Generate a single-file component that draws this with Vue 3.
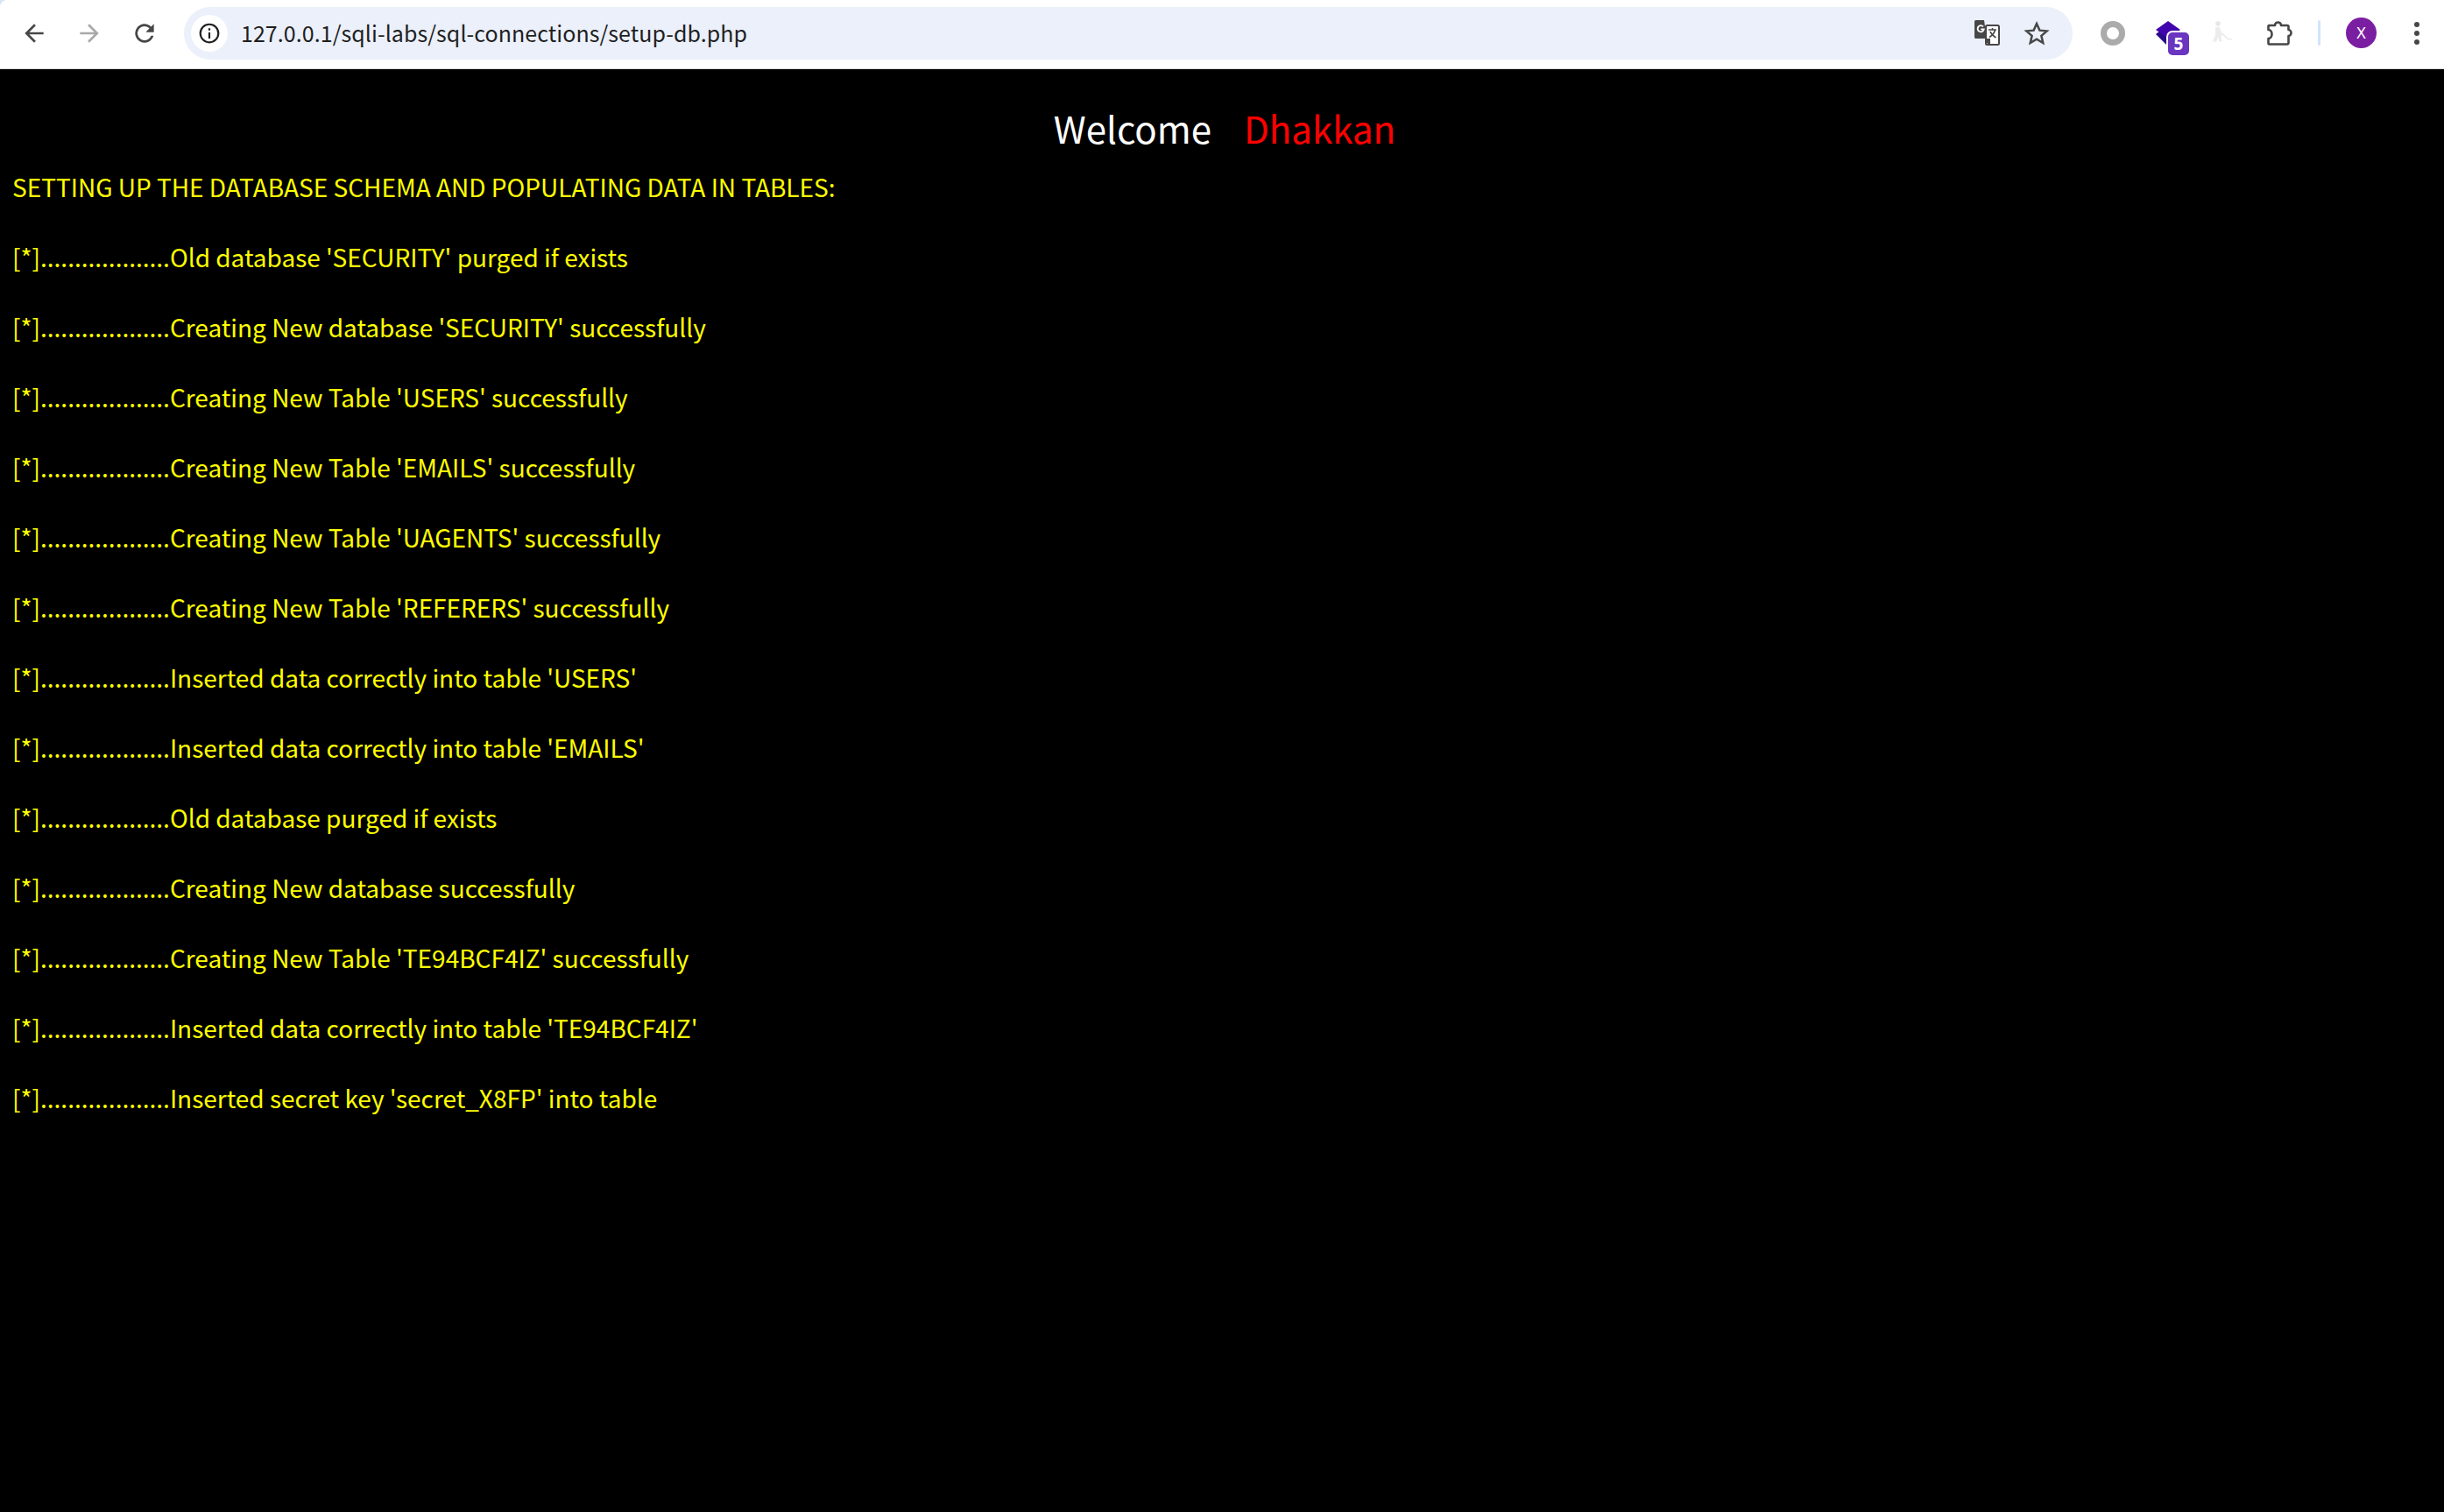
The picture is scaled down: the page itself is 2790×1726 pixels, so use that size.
<script setup>
const lines = [
  "Old database 'SECURITY' purged if exists",
  "Creating New database 'SECURITY' successfully",
  "Creating New Table 'USERS' successfully",
  "Creating New Table 'EMAILS' successfully",
  "Creating New Table 'UAGENTS' successfully",
  "Creating New Table 'REFERERS' successfully",
  "Inserted data correctly into table 'USERS'",
  "Inserted data correctly into table 'EMAILS'",
  "Old database purged if exists",
  "Creating New database successfully",
  "Creating New Table 'TE94BCF4IZ' successfully",
  "Inserted data correctly into table 'TE94BCF4IZ'",
  "Inserted secret key 'secret_X8FP' into table",
]
</script>

<template>
  <div class="page">
    <header class="toolbar">
      <div class="nav">
        <svg class="ic back" viewBox="0 0 24 24"><path d="M20 11H7.8l5.6-5.6L12 4l-8 8 8 8 1.4-1.4L7.8 13H20z" /></svg>
        <svg class="ic fwd" viewBox="0 0 24 24"><path d="M4 11h12.2l-5.6-5.6L12 4l8 8-8 8-1.4-1.4 5.6-5.6H4z" /></svg>
        <svg class="ic reload" viewBox="0 0 24 24"><path d="M17.65 6.35A8 8 0 1 0 19.73 14h-2.08A6 6 0 1 1 12 6c1.66 0 3.14.69 4.22 1.78L13 11h7V4z" /></svg>
      </div>
      <div class="omnibox">
        <div class="info">
          <svg viewBox="0 0 24 24" width="26" height="26"><circle cx="12" cy="12" r="9.5" fill="none" stroke="#1f1f1f" stroke-width="2" /><path d="M11 11h2v6.5h-2zM11 6.7h2v2.2h-2z" fill="#1f1f1f" /></svg>
        </div>
        <span class="url">127.0.0.1/sqli-labs/sql-connections/setup-db.php</span>
        <div class="omni-icons">
          <svg class="translate" viewBox="0 0 29 29" width="29" height="29">
            <rect x="13" y="6" width="15" height="22" rx="1.5" fill="#fff" stroke="#474747" stroke-width="2" />
            <path d="M1.5 0H11l3 21H1.5A1.5 1.5 0 0 1 0 19.5v-18A1.5 1.5 0 0 1 1.5 0z" fill="#474747" />
            <path d="M12 21h6v8l-4-3z" fill="#474747" />
            <path d="M10 7.4a3.6 3.6 0 1 0 .8 3H7.2" fill="none" stroke="#fff" stroke-width="1.8" />
            <path d="M16 11h9M20.5 9v2M23.5 11c-.8 4-3.2 6.5-6.5 8.5M18 13c1 2.6 3.5 5.2 6.5 7" fill="none" stroke="#474747" stroke-width="1.6" />
          </svg>
          <svg class="star" viewBox="0 0 24 24" width="30" height="30"><path d="M12 3.2l2.7 6.1 6.6.6-5 4.4 1.5 6.5L12 17.4l-5.8 3.4 1.5-6.5-5-4.4 6.6-.6z" fill="none" stroke="#474747" stroke-width="2" stroke-linejoin="miter" /></svg>
        </div>
      </div>
      <div class="exts">
        <svg class="ring" viewBox="0 0 30 30" width="30" height="30"><circle cx="15" cy="15" r="10.5" fill="none" stroke="#ababab" stroke-width="7" /></svg>
        <div class="stack">
          <svg viewBox="0 0 30 31" width="30" height="31"><path d="M0 17l5-4 11 8-4 8z" fill="#2b0a8a" /><path d="M0 12L14 2l14 10-14 10z" fill="#4205ad" /></svg>
          <span class="badge">5</span>
        </div>
        <svg class="figure" viewBox="0 0 24 24" width="24" height="24"><circle cx="8" cy="3" r="2.8" fill="#e6e6e6" /><path d="M5 7h5l2 6 3 2 5 5h4v1.5h-5l-6-5.5-1.500 1 1 6.500h-3l-1-5-2.500 5H2l3-8z" fill="#ececec" /></svg>
        <svg class="puzzle" viewBox="0 0 29 28" width="29" height="28"><path d="M2.5 5H9C9 3 10.5 1.500 12.500 1.500S16 3 16 5h7a1.500 1.500 0 0 1 1.500 1.500V10c2 0 3 2 3 3.500S26.500 17 24.500 17v8a1.500 1.500 0 0 1-1.500 1.500H2.500a1 1 0 0 1-1-1V20C4 20 5.500 17.500 5.500 15S4 10 1.500 10V6a1 1 0 0 1 1-1z" fill="none" stroke="#474747" stroke-width="2.6" stroke-linejoin="round" /></svg>
        <span class="divider"></span>
        <span class="avatar">X</span>
        <span class="dots"><i></i><i></i><i></i></span>
      </div>
    </header>
    <main class="content">
      <h1 class="welcome"><span class="white">Welcome</span><span class="red">Dhakkan</span></h1>
      <p class="row">SETTING UP THE DATABASE SCHEMA AND POPULATING DATA IN TABLES:</p>
      <p v-for="line in lines" :key="line" class="row">[*]...................{{ line }}</p>
    </main>
  </div>
</template>

<style scoped>
.page {
  width: 2790px;
  height: 1726px;
  background: #000;
  overflow: hidden;
  display: flex;
  flex-direction: column;
}
.toolbar {
  height: 78px;
  flex: none;
  background: #fff;
  display: flex;
  align-items: center;
  border-bottom: 1px solid #d9d9d9;
  box-sizing: content-box;
  position: relative;
}
.toolbar::before {
  content: "";
  position: absolute;
  left: 0;
  top: 0;
  width: 8px;
  height: 8px;
  background: radial-gradient(circle at 100% 100%, transparent 7.5px, #d8e4f8 8.5px);
}
.nav {
  display: flex;
  align-items: center;
  gap: 31px;
  padding-left: 23px;
  width: 210px;
  box-sizing: border-box;
  margin-top: -3px;
}
.ic { width: 32px; height: 32px; flex: none; }
.back path { fill: #474747; }
.fwd path { fill: #a9a9a9; }
.reload path { fill: #474747; }
.omnibox {
  width: 2156px;
  height: 60px;
  margin-top: -3px;
  background: #ebf0fa;
  border-radius: 30px;
  display: flex;
  align-items: center;
}
.info {
  width: 42px;
  height: 42px;
  margin-left: 8px;
  border-radius: 50%;
  background: #fff;
  display: flex;
  align-items: center;
  justify-content: center;
}
.url {
  margin-left: 15px;
  margin-top: -2px;
  font: 25px "Noto Sans CJK SC", "Noto Sans", sans-serif;
  letter-spacing: 0.06px;
  color: #1f1f1f;
}
.omni-icons {
  margin-left: auto;
  display: flex;
  align-items: center;
  gap: 27px;
  padding-right: 26px;
}
.exts {
  flex: 1;
  display: flex;
  align-items: center;
  padding-left: 31px;
  margin-top: -3px;
}
.stack {
  position: relative;
  margin-left: 34px;
  width: 30px;
  height: 31px;
}
.stack svg { display: block; }
.badge {
  position: absolute;
  left: 12px;
  top: 13px;
  width: 24px;
  height: 26px;
  border-radius: 7px;
  background: #6a35c0;
  border: 2px solid #fff;
  color: #fff;
  font: 700 19px/26px "Noto Sans", sans-serif;
  text-align: center;
}
.figure { margin-left: 33px; margin-bottom: 4px; }
.puzzle { margin-left: 40px; }
.divider {
  width: 3px;
  height: 29px;
  margin-left: 29px;
  background: #d3e3fd;
  border-radius: 2px;
}
.avatar {
  margin-left: 29px;
  width: 35px;
  height: 35px;
  border-radius: 50%;
  background: #7b1fa2;
  color: #fff;
  font: 18px/35px "Noto Sans", sans-serif;
  text-align: center;
}
.dots {
  margin-left: 43px;
  display: flex;
  flex-direction: column;
  gap: 4px;
}
.dots i {
  width: 6px;
  height: 6px;
  border-radius: 50%;
  background: #474747;
  display: block;
}
.content {
  font-family: "Noto Sans CJK SC", "Noto Sans", sans-serif;
}
.welcome {
  margin: 0;
  height: 94px;
  display: flex;
  justify-content: center;
  align-items: center;
  gap: 37px;
  font-size: 42px;
  font-weight: 400;
  line-height: 1;
  padding: 40px 0 0 6px;
  box-sizing: border-box;
}
.white { color: #fff; }
.red { color: #f00; }
.row {
  margin: 0;
  padding-left: 14px;
  height: 80px;
  line-height: 80px;
  font-size: 28px;
  color: #ff0;
  white-space: nowrap;
}
</style>

<style>
html, body { background: #000; }
</style>
